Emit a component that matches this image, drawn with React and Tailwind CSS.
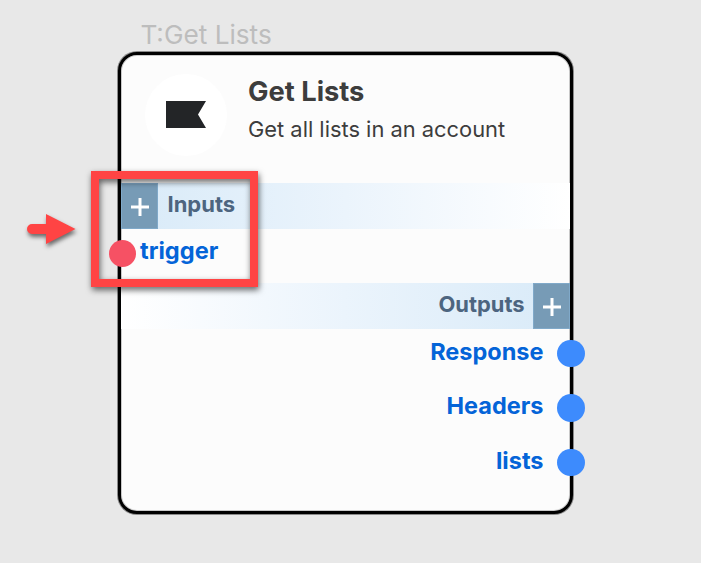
import React from "react";

function PlusIcon() {
  return (
    <svg viewBox="0 0 18 18" className="size-[18px]">
      <path d="M0 7.500h18v3H0zM7.500 0h3v18h-3z" fill="#fff" />
    </svg>
  );
}

function AddButton() {
  return (
    <button className="flex h-full w-[37px] items-center justify-center border border-[#80a9c9] bg-[#779bb6] pt-[2px]">
      <PlusIcon />
    </button>
  );
}

function OutputRow({ label }) {
  return (
    <li className="flex h-[54.5px] items-center justify-end">
      <span className="mr-[13.5px] -mt-[3px] text-[23.5px] leading-7 font-bold text-[#0464d8]">{label}</span>
      <span className="-mr-[14.5px] size-[27.5px] rounded-full bg-[#3d8bfd]" />
    </li>
  );
}

function NodeCard() {
  return (
    <section className="absolute top-[52px] left-[118px] h-[462px] w-[455px] rounded-[19px] border-[3px] border-black bg-[#fcfcfc] shadow-[0_0_0_1px_rgba(0,0,0,0.4),inset_0_0_0_1px_rgba(0,0,0,0.2)]">
      <header className="flex h-32 pt-[18px] pl-6">
        <div className="mt-px flex size-[82px] shrink-0 items-center justify-center rounded-full bg-white">
          <svg viewBox="0 0 40 27" className="mb-[2px] h-[27px] w-10">
            <path d="M0 0h40l-8 13.500L40 27H0z" fill="#232527" />
          </svg>
        </div>
        <div className="ml-[21px] text-[#3d3d3d]">
          <h1 className="mt-px text-[27.3px] leading-9 font-bold whitespace-nowrap">Get Lists</h1>
          <p className="mt-[3px] text-[21.87px] leading-8 whitespace-nowrap">Get all lists in an account</p>
        </div>
      </header>
      <div className="flex h-[46px] items-center bg-linear-to-r from-[#d8eaf8] via-[#ebf4fc] to-white">
        <AddButton />
        <h2 className="-mt-[4px] ml-[9.5px] text-[22px] leading-7 font-bold text-[#4d6580]">Inputs</h2>
      </div>
      <div className="flex h-[54px] items-center">
        <span className="-mt-[5px] -ml-[12.5px] size-[27.5px] rounded-full bg-[#f65164]" />
        <span className="-mt-[10px] ml-[4px] text-[23.6px] leading-7 font-bold text-[#0464d8]">trigger</span>
      </div>
      <div className="flex h-[46px] items-center justify-end bg-linear-to-l from-[#d8eaf8] via-[#ebf4fc] to-white">
        <h2 className="-mt-[4px] mr-[8.5px] text-[21.9px] leading-7 font-bold text-[#4d6580]">Outputs</h2>
        <AddButton />
      </div>
      <ul className="-mt-[3px]">
        <OutputRow label="Response" />
        <OutputRow label="Headers" />
        <OutputRow label="lists" />
      </ul>
    </section>
  );
}

export default function App() {
  return (
    <main className="relative h-[563px] w-[701px] overflow-hidden bg-[#e8e8e8] font-['Inter',sans-serif]">
      <p className="absolute top-[19px] left-[140.5px] text-[26.2px] leading-8 whitespace-nowrap text-[#bdbdbd]">T:Get Lists</p>
      <NodeCard />
      <div className="absolute top-[171px] left-[91px] h-[116px] w-[167px] border-8 border-[#ff4444] drop-shadow-[1px_3px_3px_rgba(0,0,0,0.6)]" />
      <svg
        viewBox="0 0 50 32"
        className="absolute top-[213px] left-[26px] h-8 w-[50px] drop-shadow-[1px_3px_2px_rgba(0,0,0,0.55)]"
      >
        <path d="M20 1l29.500 15L20 31V21H6a5 5 0 0 1 0-10h14z" fill="#ff4444" />
      </svg>
    </main>
  );
}
